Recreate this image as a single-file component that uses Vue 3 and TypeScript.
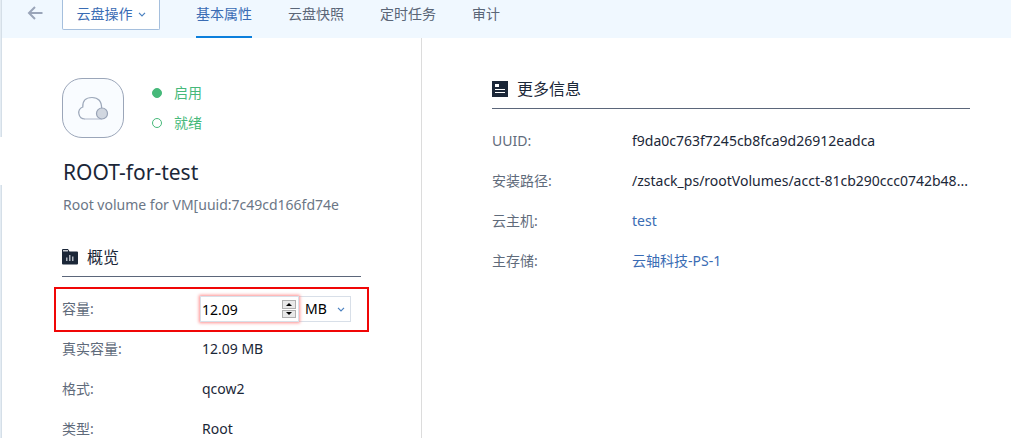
<script setup lang="ts">
import { ref } from 'vue'

interface Detail {
  label: string
  value: string
  link?: boolean
}

const tabs: string[] = ['基本属性', '云盘快照', '定时任务', '审计']
const activeTab = ref<string>('基本属性')

const capacity = ref<string>('12.09')
const unit = ref<string>('MB')
const units: string[] = ['MB', 'GB', 'TB']

function step(delta: number): void {
  const next = Math.max(0, Number(capacity.value) + delta)
  capacity.value = next.toFixed(2)
}

const overview: Detail[] = [
  { label: '真实容量:', value: '12.09 MB' },
  { label: '格式:', value: 'qcow2' },
  { label: '类型:', value: 'Root' },
]

const moreInfo: Detail[] = [
  { label: 'UUID:', value: 'f9da0c763f7245cb8fca9d26912eadca' },
  { label: '安装路径:', value: '/zstack_ps/rootVolumes/acct-81cb290ccc0742b48...' },
  { label: '云主机:', value: 'test', link: true },
  { label: '主存储:', value: '云轴科技-PS-1', link: true },
]
</script>

<template>
  <div class="page">
    <div class="rail"><span class="rail-top"></span><span class="rail-bottom"></span></div>
    <div class="main">
      <header class="toolbar">
        <button class="back" type="button" aria-label="返回">
          <svg width="16" height="14" viewBox="0 0 16 14" fill="none" stroke="#9aa5b9" stroke-width="2">
            <path d="M15.5 7H2M8 1L2 7l6 6" />
          </svg>
        </button>
        <button class="actions" type="button">
          云盘操作
          <svg width="8" height="5" viewBox="0 0 8 5" fill="none" stroke="#4a80c0" stroke-width="1.2">
            <path d="M1 .8l3 3 3-3" />
          </svg>
        </button>
        <nav class="tabs">
          <button
            v-for="tab in tabs"
            :key="tab"
            type="button"
            class="tab"
            :class="{ active: tab === activeTab }"
            @click="activeTab = tab"
          >{{ tab }}</button>
        </nav>
      </header>

      <div class="content">
        <section class="summary">
          <div class="identity">
            <div class="tile">
              <svg width="32" height="26" viewBox="0 0 32 26" fill="none">
                <path
                  d="M8 24A6.200 6.200 0 0 1 5.800 12Q5.300 2.500 15 2.500T24.600 13.500"
                  stroke="#9da8ba"
                  stroke-width="1.200"
                />
                <path d="M7 24h18" stroke="#c3cbd8" stroke-width="1.400" />
                <circle cx="25" cy="18.500" r="5.500" fill="#d1d7e0" stroke="#98a3b6" stroke-width="1.200" />
              </svg>
            </div>
            <div class="states">
              <div class="state"><span class="dot filled"></span>启用</div>
              <div class="state"><span class="dot"></span>就绪</div>
            </div>
          </div>
          <h1>ROOT-for-test</h1>
          <p class="description">Root volume for VM[uuid:7c49cd166fd74e</p>

          <h2>
            <svg width="16" height="16" viewBox="0 0 16 16">
              <path d="M0 1Q0 0 1 0h5l1.500 2.500H15q1 0 1 1V14.500q0 1-1 1H1q-1 0-1-1z" fill="#1b2738" />
              <path d="M1 1h5v1.500H1z" fill="#c6cad0" />
              <path d="M4 8.500h1.500V12H4zM7 6h1.500v6H7zM10 7.500h1.500V12H10z" fill="#aeb4bd" />
            </svg>
            概览
          </h2>
          <div class="row highlighted">
            <label class="label" for="capacity">容量:</label>
            <div class="editor">
              <div class="number">
                <input id="capacity" v-model="capacity" type="text" inputmode="decimal" />
                <span class="spinner">
                  <button type="button" aria-label="增加" @click="step(1)">
                    <svg width="6" height="3" viewBox="0 0 6 3"><path d="M0 3l3-3 3 3z" fill="#000" /></svg>
                  </button>
                  <button type="button" aria-label="减少" @click="step(-1)">
                    <svg width="6" height="3" viewBox="0 0 6 3"><path d="M0 0l3 3 3-3z" fill="#000" /></svg>
                  </button>
                </span>
              </div>
              <div class="unit">
                <select v-model="unit" aria-label="单位">
                  <option v-for="u in units" :key="u">{{ u }}</option>
                </select>
                <svg width="8" height="5" viewBox="0 0 8 5" fill="none" stroke="#4a80c0" stroke-width="1.2">
                  <path d="M1 .8l3 3 3-3" />
                </svg>
              </div>
            </div>
          </div>
          <div v-for="item in overview" :key="item.label" class="row">
            <span class="label">{{ item.label }}</span>
            <span class="value">{{ item.value }}</span>
          </div>
        </section>

        <section class="more">
          <h2>
            <svg width="16" height="16" viewBox="0 0 16 16">
              <path d="M0 0h16v16H0z" fill="#1b2738" />
              <path d="M3 3h4v3H3zM3 8h10v1H3zM3 11h10v1H3z" fill="#fff" />
            </svg>
            更多信息
          </h2>
          <div v-for="item in moreInfo" :key="item.label" class="row">
            <span class="label">{{ item.label }}</span>
            <a v-if="item.link" class="value" href="#">{{ item.value }}</a>
            <span v-else class="value">{{ item.value }}</span>
          </div>
        </section>
      </div>
    </div>
  </div>
</template>

<style>
body {
  background: #fff;
  overflow: hidden;
}
</style>

<style scoped>
.page,
.page * {
  box-sizing: border-box;
}

.page {
  display: flex;
  height: 100vh;
  overflow: hidden;
  font-family: "Noto Sans", "Noto Sans CJK SC", sans-serif;
  font-size: 14px;
  line-height: 20px;
  color: #1b2738;
}

button,
input,
select {
  font: inherit;
  margin: 0;
  padding: 0;
  border: 0;
  background: none;
}

.rail {
  display: flex;
  flex-direction: column;
  flex: 0 0 2px;
  gap: 48px;
}

.rail span {
  background: #e4ecf3;
  border-right: 1px solid #d5dfe8;
}

.rail-top {
  flex: 0 0 137px;
}

.rail-bottom {
  flex: 1;
}

.main {
  display: flex;
  flex-direction: column;
  flex: 1;
  min-width: 0;
}

.toolbar {
  display: flex;
  align-items: flex-start;
  flex: 0 0 38px;
  padding-left: 25px;
  background: #f0f8ff;
}

.back {
  display: flex;
  width: 35px;
  padding-top: 6px;
}

.actions {
  display: flex;
  align-items: center;
  justify-content: center;
  gap: 5px;
  width: 98px;
  height: 30px;
  padding-bottom: 1px;
  border: 1px solid #a5bfdd;
  border-top: 0;
  border-radius: 0 0 2px 2px;
  background: #fff;
  color: #3a6cb4;
}

.tabs {
  display: flex;
  gap: 36px;
  height: 38px;
  margin-left: 36px;
}

.tab {
  padding: 4px 0 12px;
  border-bottom: 2px solid transparent;
  color: #5a6677;
}

.tab.active {
  color: #3a6cb4;
  border-bottom-color: #0c7fdc;
}

.content {
  display: grid;
  grid-template-columns: 420px 1fr;
  flex: 1;
  min-height: 0;
}

.summary {
  padding: 40px 60px 0;
  border-right: 1px solid #dcdcdc;
}

.identity {
  display: flex;
  gap: 28px;
}

.tile {
  display: flex;
  align-items: center;
  justify-content: center;
  width: 62px;
  height: 60px;
  border: 1px solid #9ba6b9;
  border-radius: 20px;
  background: #f9fcff;
}

.state {
  display: flex;
  align-items: center;
  gap: 12px;
  height: 30px;
  color: #46b97a;
}

.dot {
  width: 10px;
  height: 10px;
  border: 1px solid #46b97a;
  border-radius: 50%;
}

.filled {
  background: #46b97a;
}

h1 {
  margin: 18px 0 5px;
  padding-left: 1px;
  font-size: 21px;
  font-weight: 400;
  line-height: 32px;
}

.description {
  margin: 0 0 27px;
  padding-left: 1px;
  line-height: 24px;
  color: #6b7686;
  white-space: nowrap;
}

h2 {
  display: flex;
  align-items: center;
  gap: 9px;
  height: 33px;
  margin: 0 0 12px;
  padding-bottom: 7px;
  border-bottom: 1px solid #5b667a;
  font-size: 16px;
  font-weight: 400;
  line-height: 24px;
}

.row {
  display: flex;
  align-items: center;
  height: 40px;
  white-space: nowrap;
}

.label {
  flex: 0 0 140px;
  color: #5f6b7b;
}

a {
  color: #3a6cb4;
  text-decoration: none;
}

.highlighted {
  position: relative;
}

.highlighted::after {
  content: "";
  position: absolute;
  inset: -2px -8px -3px;
  border: 2px solid #f00606;
  pointer-events: none;
}

.highlighted .label {
  flex-basis: 138px;
}

.editor {
  display: flex;
  height: 26px;
}

.number {
  display: flex;
  align-items: center;
  width: 99px;
  padding: 0 2px 0 1px;
  border: 1px solid #d8dfe8;
  box-shadow: 0 0 3px 1px #ff9090;
  background: #fff;
  z-index: 1;
}

.number input {
  flex: 1;
  min-width: 0;
  height: 22px;
  color: #000;
  outline: 0;
}

.spinner {
  display: grid;
  grid-template-rows: 1fr 1fr;
  gap: 1px;
  width: 14px;
  height: 18px;
}

.spinner button {
  display: flex;
  align-items: center;
  justify-content: center;
  border: 1px solid #b0b0b0;
  background: #e9e9e9;
}

.unit {
  display: grid;
  align-items: center;
  width: 52px;
  border: 1px solid #d8dfe8;
  border-left: 0;
}

.unit select,
.unit svg {
  grid-area: 1 / 1;
}

.unit select {
  width: 100%;
  height: 24px;
  padding-left: 6px;
  appearance: none;
  color: #000;
  outline: 0;
}

.unit svg {
  justify-self: end;
  margin-right: 5px;
  pointer-events: none;
}

.more {
  min-width: 0;
  padding: 38px 41px 0 70px;
}
</style>
